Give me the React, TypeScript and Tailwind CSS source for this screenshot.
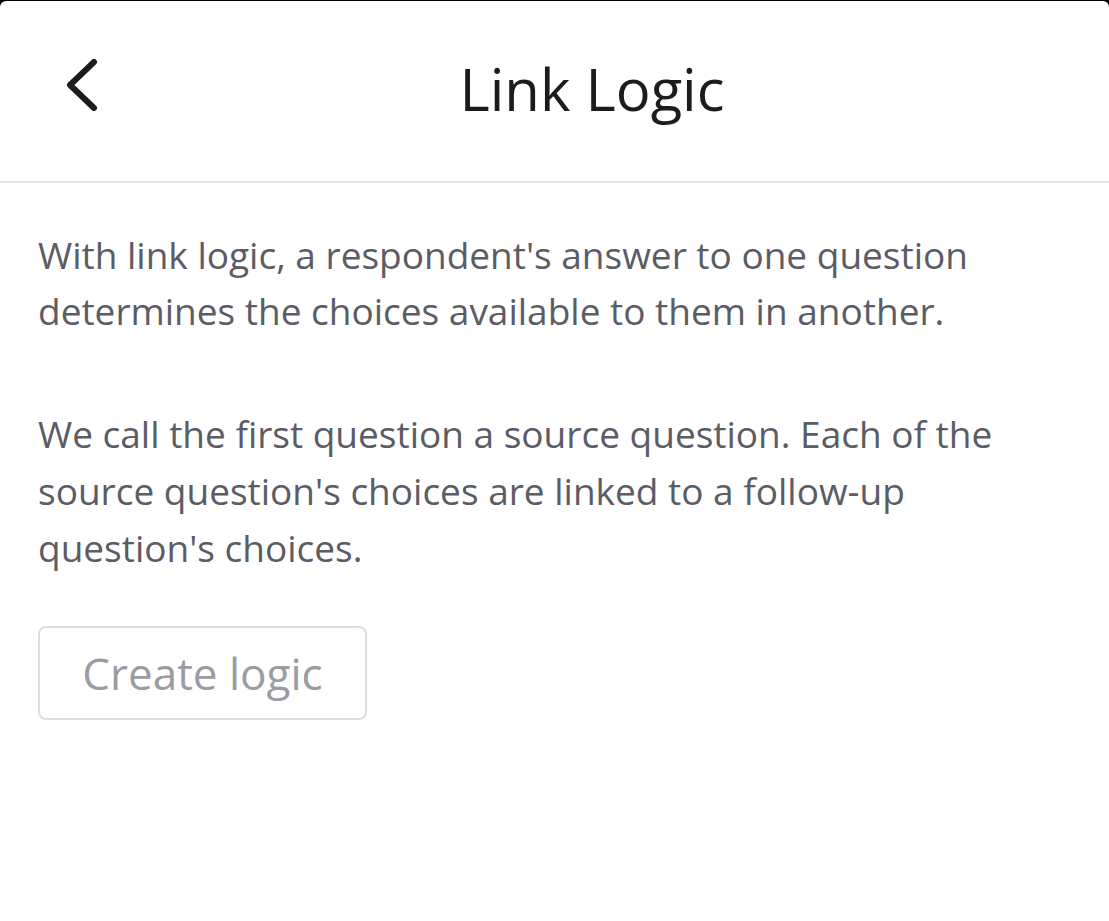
import React from "react";

export default function App() {
  return (
    <div className="min-h-[921px] w-full bg-black pt-px" style={{ fontFamily: '"Open Sans", "Liberation Sans", sans-serif' }}>
      <div className="min-h-[920px] rounded-t-[6px] bg-white">
        <header className="flex h-[182px] items-center border-b-2 border-[#e3e3e3]">
          <div className="w-[130px] shrink-0 pl-[63px]">
            <svg width="36" height="52" viewBox="0 0 36 52" fill="none" className="-mt-[12px] block">
              <path d="M31 3 L7 26 L31 49" stroke="#1c1c1c" strokeWidth="6" strokeLinecap="round" strokeLinejoin="round" />
            </svg>
          </div>
          <h1 className="-mt-[4px] flex-1 pr-[55px] text-center text-[58px] font-normal leading-none text-[#1c1c1c]">Link Logic</h1>
        </header>
        <main className="px-[38px] pt-[44px]">
          <p className="text-[37px] leading-[56px] text-[#5b5c64]">
            With link logic, a respondent's answer to one question determines the choices available to them in another.
          </p>
          <p className="mt-[66px] text-[37px] leading-[57px] text-[#5b5c64]">
            We call the first question a source question. Each of the source question's choices are linked to a follow-up question's choices.
          </p>
          <button className="mt-[50px] flex h-[94px] w-[329px] items-center justify-center rounded-[8px] border-2 border-[#dedede] bg-white text-[44px] text-[#9a9ca3]">
            Create logic
          </button>
        </main>
      </div>
    </div>
  );
}
